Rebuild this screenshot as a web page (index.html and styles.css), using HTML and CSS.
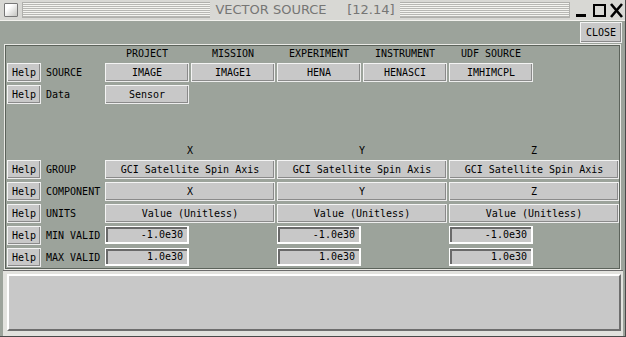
FILE: index.html
```html
<!DOCTYPE html>
<html lang="en">
<head>
    <meta charset="UTF-8">
    <title>VECTOR SOURCE</title>
    <link rel="stylesheet" href="styles.css">
</head>
<body>
    <div class="window">
        <div class="titlebar">
            <div class="menu-box"></div>
            <div class="stripes">
                <span class="title">VECTOR SOURCE&nbsp;&nbsp;&nbsp;&nbsp;&nbsp;[12.14]</span>
            </div>
            <svg class="wm" width="52" height="20" viewBox="0 0 52 20">
                <rect x="4" y="14" width="10" height="3" fill="#000"/>
                <rect x="22" y="5" width="11" height="11" fill="none" stroke="#000" stroke-width="2"/>
                <path d="M39 4 L50 17 M50 4 L39 17" stroke="#000" stroke-width="2.6" fill="none"/>
            </svg>
        </div>

        <div class="topbar">
            <div class="btn close">CLOSE</div>
        </div>

        <div class="panel">
            <div class="grid top">
                <div class="head c3">PROJECT</div>
                <div class="head">MISSION</div>
                <div class="head">EXPERIMENT</div>
                <div class="head">INSTRUMENT</div>
                <div class="head">UDF SOURCE</div>

                <div class="btn help c1">Help</div>
                <div class="label">SOURCE</div>
                <div class="btn">IMAGE</div>
                <div class="btn">IMAGE1</div>
                <div class="btn">HENA</div>
                <div class="btn">HENASCI</div>
                <div class="btn">IMHIMCPL</div>

                <div class="btn help c1">Help</div>
                <div class="label">Data</div>
                <div class="btn">Sensor</div>
            </div>

            <div class="grid bottom">
                <div class="head c3 wide">X</div>
                <div class="head wide">Y</div>
                <div class="head wide">Z</div>

                <div class="btn help c1">Help</div>
                <div class="label">GROUP</div>
                <div class="btn wide">GCI Satellite Spin Axis</div>
                <div class="btn wide">GCI Satellite Spin Axis</div>
                <div class="btn wide">GCI Satellite Spin Axis</div>

                <div class="btn help c1">Help</div>
                <div class="label">COMPONENT</div>
                <div class="btn wide">X</div>
                <div class="btn wide">Y</div>
                <div class="btn wide">Z</div>

                <div class="btn help c1">Help</div>
                <div class="label">UNITS</div>
                <div class="btn wide">Value (Unitless)</div>
                <div class="btn wide">Value (Unitless)</div>
                <div class="btn wide">Value (Unitless)</div>

                <div class="btn help c1">Help</div>
                <div class="label">MIN VALID</div>
                <div class="field c3">-1.0e30</div>
                <div class="field c5">-1.0e30</div>
                <div class="field c7">-1.0e30</div>

                <div class="btn help c1">Help</div>
                <div class="label">MAX VALID</div>
                <div class="field c3">1.0e30</div>
                <div class="field c5">1.0e30</div>
                <div class="field c7">1.0e30</div>
            </div>
        </div>

        <div class="message">
            <div class="message-inner"></div>
        </div>
    </div>
</body>
</html>
```

FILE: styles.css
```css
body {
    margin: 0;
    background: #9ca39b;
    font-family: "DejaVu Sans Mono", monospace;
    font-size: 10px;
    color: #000;
}
.window {
    width: 626px;
    height: 337px;
    background: #9ca39b;
    box-sizing: border-box;
    border-right: 1px solid #4a4a4a;
    border-bottom: 1px solid #4a4a4a;
    overflow: hidden;
}

/* title bar */
.titlebar {
    height: 20px;
    background: #d8d8d4;
    border-bottom: 1px solid #f2f2ee;
    display: flex;
    align-items: center;
    padding: 0 0 0 4px;
    box-sizing: content-box;
}
.menu-box {
    width: 12px;
    height: 12px;
    border: 1px solid #777;
    background: linear-gradient(135deg, #ffffff 30%, #c4c4c0);
    border-radius: 1px;
}
.stripes {
    flex: 1;
    height: 14px;
    margin: 0 2px 0 4px;
    border: 1px solid #b0b0ac;
    background: repeating-linear-gradient(to bottom, #f4f4f0 0, #f4f4f0 1px, #b8b8b4 1px, #b8b8b4 2px);
    display: flex;
    justify-content: center;
    align-items: center;
    padding-left: 18px;
}
.title {
    background: #d8d8d4;
    padding: 0 5px;
    font-family: "DejaVu Sans", sans-serif;
    font-size: 13px;
    color: #767674;
    line-height: 16px;
}
.wm {
    display: block;
    margin-right: 1px;
}

/* close row */
.topbar {
    height: 23px;
    display: flex;
    justify-content: flex-end;
    align-items: flex-start;
    padding: 1px 3px 0 0;
    box-sizing: border-box;
}
.btn {
    background: #c8c8c8;
    border-top: 1px solid #f4f4f4;
    border-left: 1px solid #f4f4f4;
    border-right: 1px solid #ededed;
    border-bottom: 1px solid #ededed;
    box-shadow: inset -1px -1px 0 #8a8a8a;
    display: flex;
    align-items: center;
    justify-content: center;
    white-space: nowrap;
    box-sizing: border-box;
}
.close {
    width: 42px;
    height: 21px;
}

/* main panel */
.panel {
    margin: 0 4px;
    height: 226px;
    box-sizing: border-box;
    border: 1px solid #eaeae6;
    box-shadow: inset 1px 1px 0 #5c635b, inset -1px -1px 0 #5c635b;
    padding: 2px 0 0 2px;
}
.grid {
    display: grid;
    grid-template-columns: 34px 60px repeat(6, 84px);
    column-gap: 2px;
    row-gap: 3px;
}
.top {
    grid-template-rows: 13px 19px 19px;
}
.bottom {
    margin-top: 40px;
    grid-template-rows: 13px repeat(5, 19px);
}
.c1 { grid-column: 1; }
.c3 { grid-column: 3; }
.c5 { grid-column: 5; }
.c7 { grid-column: 7; }
.wide { grid-column-end: span 2; }
.head {
    text-align: center;
    line-height: 13px;
}
.label {
    display: flex;
    align-items: center;
    padding-left: 3px;
}
.field {
    background: #c8c8c8;
    border-top: 1px solid #ffffff;
    border-left: 1px solid #ffffff;
    border-right: 2px solid #ffffff;
    border-bottom: 2px solid #ffffff;
    box-shadow: inset 2px 2px 0 #6a6a6a;
    box-sizing: border-box;
    height: 18px;
    display: flex;
    align-items: center;
    justify-content: flex-end;
    padding-right: 4px;
}

/* message area */
.message {
    margin: 0 2px 0 3px;
    height: 66px;
    box-sizing: border-box;
    background: #e2e2de;
    border-top: 1px solid #6a6a6a;
    padding: 3px 2px 5px 4px;
}
.message-inner {
    height: 100%;
    box-sizing: border-box;
    background: #c8c8c8;
    border-top: 2px solid #ffffff;
    border-left: 2px solid #ffffff;
    border-right: 2px solid #6e6e6e;
    border-bottom: 2px solid #6e6e6e;
}
```
